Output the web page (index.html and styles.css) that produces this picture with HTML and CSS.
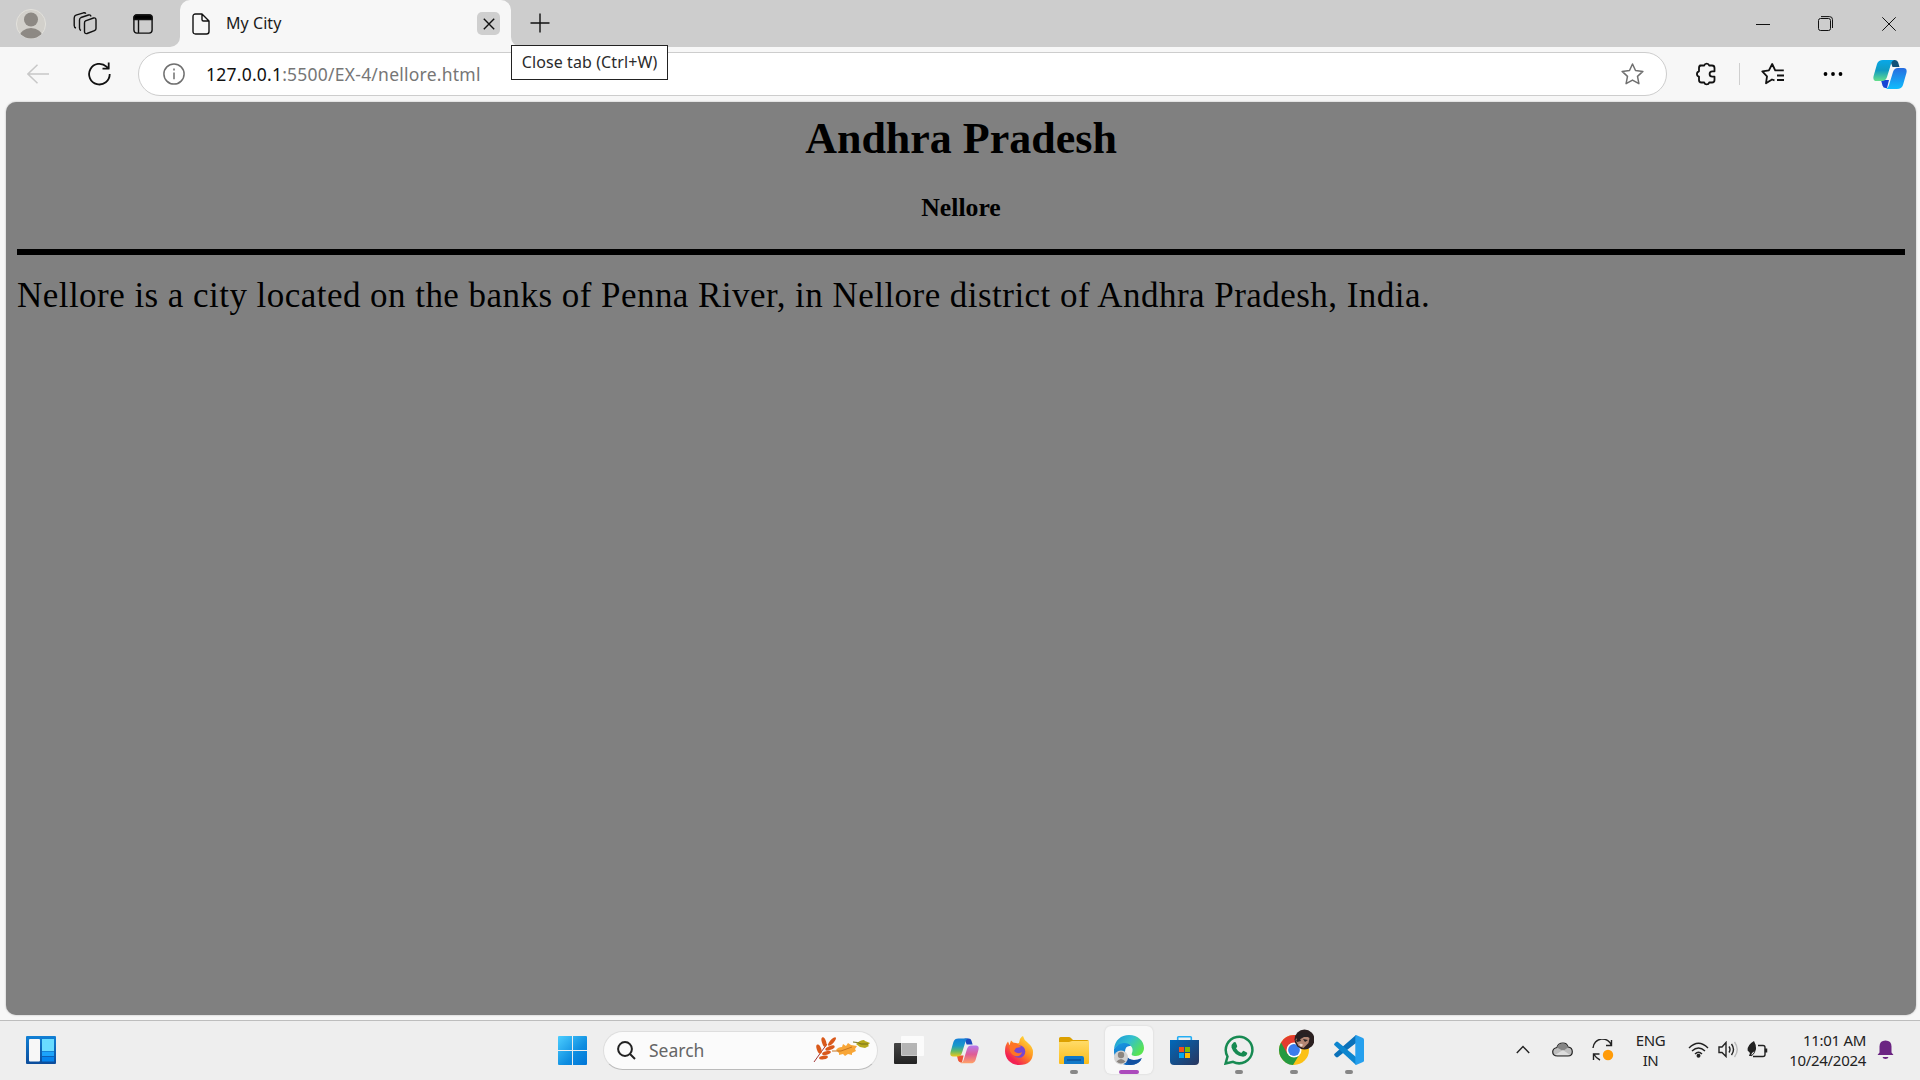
FILE: index.html
```html
<!DOCTYPE html>
<html lang="en">
<head>
<meta charset="utf-8">
<title>My City</title>
<link rel="stylesheet" href="styles.css">
</head>
<body>
<div class="desktop">
  <header class="titlebar">
    <div class="title-left">
      <div class="cell w61"><svg width="30" height="32" viewBox="0 0 30 32"><defs><clipPath id="av"><circle cx="15" cy="16" r="14.5"/></clipPath></defs><circle cx="15" cy="16" r="14.6" fill="#d2d0cb" stroke="#e2e1dc"/><g clip-path="url(#av)" fill="#8d8984"><circle cx="15" cy="11.5" r="7"/><ellipse cx="15" cy="29" rx="11.5" ry="9"/></g></svg></div>
      <div class="cell w48"><svg width="24" height="24" viewBox="0 0 24 24" class="line"><path d="M12.500 8.800 20.500 6Q23 5.400 23 8v8.500q0 1.500-1.500 2.100L14 21.500Q11.500 22 11.500 19.500V11Q11.500 9.300 12.500 8.800ZM8 18.500Q6.500 18 6.500 16V8Q6.500 6.300 8 5.500L15.500 3q2-.6 2.500 1.500M3 16Q1.200 15.500 1.200 13.500V6Q1.200 4 3 3.200L10.500.8q1.500-.4 2.400.8"/></svg></div>
      <div class="cell w68"><svg width="20" height="20" viewBox="0 0 20 20" class="line"><rect x=".9" y=".9" width="18.200" height="18.200" rx="3"/><path d="M1 5.500V3.500Q1 1 3.500 1h13Q19 1 19 3.500v2Z" fill="#000"/><path d="M5.500 6v13"/></svg></div>
    </div>
    <div class="tab-well">
      <div class="tab">
        <svg width="18" height="22" viewBox="0 0 18 22" class="line"><path d="M1 3.500Q1 1 3.500 1H10l7 7v10.500Q17 21 14.500 21h-11Q1 21 1 18.500ZM10 1v5.500Q10 8 11.500 8H17"/></svg>
        <span class="tab-title">My City</span>
        <span class="tab-close"><svg width="12" height="12" viewBox="0 0 12 12" class="line"><path d="m.8.8 10.400 10.400M11.200.8.8 11.200"/></svg></span>
      </div>
    </div>
    <div class="title-right">
      <div class="cell w58"><svg width="20" height="20" viewBox="0 0 20 20" class="line plus"><path d="M10 .5v19M.5 10h19"/></svg></div>
      <div class="window-buttons">
        <div class="cell w63"><svg width="14" height="14" viewBox="0 0 14 14" class="thin"><path d="M0 7.500h14"/></svg></div>
        <div class="cell w63"><svg width="15" height="15" viewBox="0 0 15 15" class="thin"><rect x=".5" y="2.500" width="12" height="12" rx="2"/><path d="M3 .6h8.500q3 0 3 3V12"/></svg></div>
        <div class="cell w63"><svg width="14" height="14" viewBox="0 0 14 14" class="thin"><path d="m.3.300 13.400 13.400M13.700.3.300 13.700"/></svg></div>
      </div>
    </div>
    <div class="tooltip"><span>Close tab (Ctrl+W)</span></div>
  </header>

  <div class="toolbar">
    <div class="cell w76"><svg width="22" height="20" viewBox="0 0 22 20" class="back"><path d="M22 10H1M10.500.7.900 10l9.600 9.300"/></svg></div>
    <div class="cell w46"><svg width="23" height="24" viewBox="0 0 23 24" class="line bold"><path d="M21.700 12A10.300 10.300 0 1 1 18.500 4.700L20.500 6.500M20.700.5v6.200h-6.200"/></svg></div>
    <div class="address">
      <svg width="22" height="22" viewBox="0 0 22 22" class="info"><circle cx="11" cy="11" r="10.100"/><path d="M11 9.500v6.800M11 5.500v2"/></svg>
      <span class="url"><b>127.0.0.1</b>:5500/EX-4/nellore.html</span>
      <svg width="23" height="22" viewBox="0 0 23 22" class="info star"><path d="m11.500 1 3 6.500 7.400.9-5.400 5 1.400 7.300-6.400-3.600-6.400 3.600 1.400-7.300-5.400-5 7.400-.9Z"/></svg>
    </div>
    <div class="cell w66 ext"><svg width="22" height="24" viewBox="0 0 22 24" class="line bold"><path d="M5 3.500h4.200a2.600 2.600 0 0 1 5 0H17q2.500 0 2.500 2.500v3.300h-2.200a2.700 2.700 0 0 0 0 5.400h2.200V18q0 2.500-2.500 2.500h-2.800a2.600 2.600 0 0 1-5 0H6.500Q4 20.500 4 18v-3.300a2.800 2.800 0 0 1 0-5.400V6Q4 3.500 6 3.500Z"/></svg></div>
    <div class="divider"></div>
    <div class="cell w66"><svg width="24" height="22" viewBox="0 0 24 22" class="line bold"><path d="M13.500 17.300 11 16.500l-6 3.800 1-7L1.300 8.400l6.600-1L11.200 1l3 6.400h8.600M16 12.500h7M16 17h7"/></svg></div>
    <div class="cell w54"><svg width="20" height="6" viewBox="0 0 20 6"><circle cx="2.500" cy="3" r="1.900"/><circle cx="10" cy="3" r="1.900"/><circle cx="17.500" cy="3" r="1.900"/></svg></div>
    <div class="cell w60"><svg width="34" height="30" viewBox="0 0 34 30"><defs><linearGradient id="c1" x2="0" y2="1"><stop stop-color="#08a8e9"/><stop offset=".5" stop-color="#119bc1"/><stop offset="1" stop-color="#65df8b"/></linearGradient><linearGradient id="c2" x2="0" y2="1"><stop stop-color="#276de0"/><stop offset="1" stop-color="#10bdfd"/></linearGradient></defs><path d="M17 1h5q2.500 0 3.200 2.500L26.500 8h-7Z" fill="#115279"/><path d="M8 21h8l-2 8h-1.500q-2.200 0-3-2.500Z" fill="#1745d4"/><path d="M10 1h11.500q-2.500.5-3.500 4l-4 13q-1.200 4-5 4H3.500Q-.5 22 .6 17L4 5Q5.300 1 10 1Z" fill="url(#c1)"/><path d="M24 30H12.500q2.500-.5 3.500-4l4-13q1.200-4 5-4h5.500q4 0 2.900 5L30 26q-1.300 4-6 4Z" fill="url(#c2)"/></svg></div>
  </div>

  <div class="viewport">
    <main class="page">
      <h1>Andhra Pradesh</h1>
      <h3>Nellore</h3>
      <hr>
      <p>Nellore is a city located on the banks of Penna River, in Nellore district of Andhra Pradesh, India.</p>
    </main>
  </div>

  <footer class="taskbar">
    <div class="widgets"><svg width="30" height="28" viewBox="0 0 30 28"><defs><linearGradient id="wg" x2="0" y2="1"><stop stop-color="#1180d5"/><stop offset="1" stop-color="#0b4c9b"/></linearGradient></defs><rect width="30" height="28" rx="1" fill="url(#wg)"/><rect x="3" y="3" width="11" height="22.500" rx="1" fill="#f7f7f7"/><path fill="#69dcff" d="M16 3h12v12H16z"/><path fill="#1ca4fb" d="M16 15.500h12v4.500H16z"/><path fill="#0584ed" d="M16 20.800h12v4.700H16z"/></svg></div>
    <div class="apps">
      <div class="start"><svg width="29" height="29" viewBox="0 0 29 29"><defs><linearGradient id="st" x2="1" y2="1"><stop stop-color="#4cceff"/><stop offset=".6" stop-color="#0e8de0"/><stop offset="1" stop-color="#0075d7"/></linearGradient></defs><path fill="url(#st)" d="M1 0h13v14H0V1Q0 0 1 0ZM15 0h13q1 0 1 1v13H15ZM0 15h14v14H1q-1 0-1-1ZM15 15h14v13q0 1-1 1H15Z"/></svg></div>
      <div class="search">
        <svg width="19" height="19" viewBox="0 0 19 19" class="glass"><circle cx="8" cy="8" r="6.900"/><path d="m13 13 5 5"/></svg>
        <span class="search-label">Search</span>
        <svg width="58" height="26" viewBox="0 0 58 26" class="leaves"><path d="M1 25Q8 15 14 7" stroke="#a3383a" fill="none"/><g fill="#d9591b"><ellipse cx="11" cy="5" rx="2.100" ry="5" transform="rotate(-18 11 5)"/><ellipse cx="19" cy="4.500" rx="2" ry="5.500" transform="rotate(42 19 4.500)"/><ellipse cx="6" cy="12" rx="2.200" ry="4.800" transform="rotate(-20 6 12)"/><ellipse cx="17" cy="11" rx="1.900" ry="5" transform="rotate(68 17 11)"/><ellipse cx="13.500" cy="16" rx="1.800" ry="4.500" transform="rotate(75 13.500 16)"/><ellipse cx="10.500" cy="20.500" rx="1.900" ry="4.500" transform="rotate(80 10.500 20.500)"/></g><path d="M23 13q2-3 6-3l1-3 3 2 2-3 3 2 6 1-2 3 1 2-4 2 0 2-4-1-3 2-2-2-4 1v-2Z" fill="#f8a637"/><path d="M19 14h9l11-4" stroke="#c87421" fill="none"/><path d="M43 7q4-4 8-4l1 1 5 2-2 2 1 1-4 2-5-1Z" fill="#b6a91c"/><path d="M40 5q5 0 8 2h7" stroke="#776f19" fill="none"/></svg>
      </div>
      <div class="app"><svg width="30" height="28" viewBox="0 0 30 28"><defs><linearGradient id="tv" x2="0" y2="1"><stop stop-color="#454545"/><stop offset="1" stop-color="#222"/></linearGradient></defs><rect y="7" width="23" height="21" rx="1" fill="url(#tv)"/><rect x="7" width="23" height="20" rx="1" fill="#fff" opacity=".75"/><path d="M8 7h15v12H8z" fill="#aaa" opacity=".7"/></svg></div>
      <div class="app"><svg width="29" height="27" viewBox="0 0 34 30"><defs><linearGradient id="p1" x2="0" y2="1"><stop stop-color="#147fd8"/><stop offset=".4" stop-color="#1899c9"/><stop offset=".7" stop-color="#61b969"/><stop offset="1" stop-color="#edc91b"/></linearGradient><linearGradient id="p2" x2="0" y2="1"><stop stop-color="#b57aef"/><stop offset=".5" stop-color="#df5c96"/><stop offset="1" stop-color="#ffa267"/></linearGradient></defs><path d="M17 1h5q2.500 0 3.200 2.500L26.500 8h-7Z" fill="#1b49bd"/><path d="M8 21h8l-2 8h-1.500q-2.200 0-3-2.500Z" fill="#ee5535"/><path d="M10 1h11.500q-2.500.5-3.500 4l-4 13q-1.200 4-5 4H3.500Q-.5 22 .6 17L4 5Q5.300 1 10 1Z" fill="url(#p1)"/><path d="M24 30H12.500q2.500-.5 3.500-4l4-13q1.200-4 5-4h5.500q4 0 2.900 5L30 26q-1.300 4-6 4Z" fill="url(#p2)"/></svg></div>
      <div class="app"><svg width="28" height="29" viewBox="0 0 28 29"><defs><linearGradient id="ff" x1="1" x2=".2" y2="1"><stop offset=".1" stop-color="#ffe43c"/><stop offset=".5" stop-color="#ff8b20"/><stop offset=".85" stop-color="#f32253"/></linearGradient></defs><path d="M14 29C6 29 0 23 0 15q0-6 3-9.500L4.500 9 6 4.500 10 8l4-1 1-4q2-3 3-3 1 4 4 6l1 1q5 4 5 9 0 13-14 13Z" fill="url(#ff)"/><circle cx="14" cy="15.500" r="6.300" fill="#7947cf"/><path d="M5 8q5-3 9 1l2 2-5 1-2 3q4 4 8 1-1 5-7 4Q3 17 5 8Z" fill="#ff7425"/></svg></div>
      <div class="app"><svg width="30" height="27" viewBox="0 0 30 27"><defs><linearGradient id="fd" x2="0" y2="1"><stop stop-color="#ffdb69"/><stop offset="1" stop-color="#fcbc19"/></linearGradient></defs><path d="M0 1.500Q0 0 1.500 0H10q1 0 2 1l2 2h14q2 0 2 2v6H0Z" fill="#dca000"/><path d="M0 5h10l3-1h17v22q0 1-1 1H1q-1 0-1-1Z" fill="url(#fd)"/><path d="M5 27v-6q0-2 2-2h16q2 0 2 2v6Z" fill="#1178c8"/><path d="M8 23h14" stroke="#0a4c91" stroke-width="1.300"/></svg><i></i></div>
      <div class="app active"><svg width="30" height="30" viewBox="0 0 30 30"><defs><linearGradient id="e1" x2="1" y2=".6"><stop stop-color="#1695d6"/><stop offset=".5" stop-color="#33bfd0"/><stop offset="1" stop-color="#5ae451"/></linearGradient><linearGradient id="e2" x2=".5" y2="1"><stop stop-color="#1a9be4"/><stop offset="1" stop-color="#0c62bc"/></linearGradient></defs><path d="M0 14C1 5 7 0 15 0c9 0 15 6 15 13 0 5-4 8-8 8-4 0-5-1-4-3 2-5-1-9-7-9-5 0-9 2-11 5Z" fill="url(#e1)"/><path d="M0 14C4 7 14 6 17 11q-6-1-6 6c0 7 8 11 16 8-3 4-7 5-12 5C6 30-1 23 0 14Z" fill="url(#e2)"/><path d="M12 20q4 8 16 3-3 7-12 7-5-2-4-10Z" fill="#1351a1"/><circle cx="7" cy="22.500" r="7" fill="#d2d2d2"/><circle cx="7" cy="20" r="3.200" fill="#8b8580"/><path d="M2.500 26.500q4.500-5 9 0-4.500 4-9 0Z" fill="#8b8580"/></svg><i></i></div>
      <div class="app"><svg width="29" height="29" viewBox="0 0 29 29"><defs><linearGradient id="ms" x2="1" y2="1"><stop stop-color="#0069bb"/><stop offset="1" stop-color="#29355d"/></linearGradient></defs><path d="M7.700 5V1.500Q7.700.8 8.500.8h12q.8 0 .8.700V5" fill="none" stroke="#24adf3" stroke-width="1.600"/><path d="M0 4h29v21q0 4-4 4H4q-4 0-4-4Z" fill="url(#ms)"/><path fill="#f34f1c" d="M9 11h5v5H9z"/><path fill="#7fbc00" d="M15 11h5v5h-5z"/><path fill="#01a6f0" d="M9 17h5v5H9z"/><path fill="#ffba01" d="M15 17h5v5h-5z"/></svg></div>
      <div class="app"><svg width="30" height="30" viewBox="0 0 30 30"><path d="M1.600 28.500 3.500 21.500A13.300 13.300 0 1 1 9 26.800Z" fill="none" stroke="#178a52" stroke-width="2.500"/><path d="M9.500 7.500q2-1 2.500.5l1.200 3q.3.800-1.200 2.300 1.700 3.400 5.200 4.700l1.600-1.800q.5-.6 1.200-.2l2.800 1.400q.7.400.3 1.600-1 2.700-4 2.700Q10 20.500 7.500 12.500q-.5-3 2-5Z" fill="#178a52"/></svg><i></i></div>
      <div class="app"><svg width="40" height="36" viewBox="0 0 40 36" class="chrome"><circle cx="20" cy="21" r="15" fill="#fbc116"/><path d="M7 13.500A15 15 0 0 1 33 13.500H20Z" fill="#e33b2e"/><path d="M7 13.500A15 15 0 0 0 19 36l7-11.500-6-3Z" fill="#249a41"/><path d="M7 13.500 13.500 25 20 14h13L20 8Z" fill="#e33b2e"/><circle cx="20" cy="21" r="7.500" fill="#fff"/><circle cx="20" cy="21" r="5.900" fill="#3a7cec"/><circle cx="30.500" cy="10.500" r="10" fill="#2b2021"/><path d="M21.500 11q2-5 9-5l5 3-1 5-5 5-5-2Z" fill="#b38673"/><path d="M22 7q7-7 15 1l-7 0-7 4ZM29 10l5 1-3 2ZM22 11l4-1 1 2-4 1Z" fill="#272123"/><path d="M25 15q3-1 4 1l-2 2Z" fill="#e7d2c7"/></svg><i></i></div>
      <div class="app"><svg width="30" height="30" viewBox="0 0 30 30"><path d="M22 0v8L4 22q-1 .8-2 0l-1.500-1.500q-.8-1 0-1.800Z" fill="#0b71b9"/><path d="M22 30v-8L4 7q-1-.8-2 0L.5 8.500q-.8 1 0 1.800Z" fill="#0d86cf"/><path d="m22 0 7 3q1 .5 1 1.500v21q0 1-1 1.500l-7 3q-.7-.5-.7-2V2q0-1.500.7-2Z" fill="#26a0ee"/></svg><i></i></div>
    </div>
    <div class="tray">
      <div class="cell w40"><svg width="14" height="9" viewBox="0 0 14 9" class="tray-line"><path d="m.8 8 6.200-6.500L13.200 8"/></svg></div>
      <div class="cell w40"><svg width="21" height="15" viewBox="0 0 21 15"><path d="M5.500 14Q.7 14 .7 9.800.7 6.500 5 5.500 6 1 11 1q4 0 5 4 4.300.5 4.300 4.700T16 14Z" fill="#bdbdbd" stroke="#222" stroke-width="1.200"/><path d="M5 5.500Q6 1.500 11 1.500q4 0 5 4L11 9Z" fill="#858585"/><path d="m3 13 8-5 7 5Z" fill="#ddd"/></svg></div>
      <div class="cell w40"><svg width="22" height="22" viewBox="0 0 22 22" class="sync"><path d="M1 9A9.500 9.500 0 0 1 19.500 6.500M19.500 1v5.500H14M8 21q-4-2-6-5.500M1.500 21v-6h6" /><circle cx="16" cy="16" r="5.200"/></svg></div>
      <div class="lang"><span>ENG</span><span>IN</span></div>
      <div class="status">
        <svg width="21" height="16" viewBox="0 0 21 16" class="tray-line"><path d="M1 6Q10.500-3.500 20 6M4 9q6.500-6 13 0M7 12q3.500-3.500 7 0"/><circle cx="10.500" cy="13.700" r="1.300" fill="#222"/></svg>
        <svg width="21" height="17" viewBox="0 0 21 17" class="tray-line"><path d="M1 6h3l4-4.500v14L4 11.500H1ZM11 5.500q2 3 0 6M13.500 3q4 5.500 0 11"/><path d="M16.500 1q5.500 7.500 0 15" stroke="#bbb"/></svg>
        <svg width="22" height="18" viewBox="0 0 22 18" class="tray-line"><path d="M11 4.500h5Q18 4.500 18 6.500v7q0 2-2 2H6"/><path d="M19 7.500v4" stroke-width="2.500"/><path d="M7 0Q0 4 .6 9.500L3 12l-1 3h2l1-3q7-3 2-12Z" fill="#222" stroke="none"/><path d="M4 15q5-3 4-9" stroke-width="1"/></svg>
      </div>
      <div class="clock"><span class="time">11:01 AM</span><span class="date">10/24/2024</span></div>
      <svg width="17" height="20" viewBox="0 0 17 20" class="bell"><path d="M8.500.5q6 0 6 6v6l2 2.500H.5l2-2.500v-6q0-6 6-6ZM5.500 17h6q-.5 2-3 2t-3-2Z"/></svg>
    </div>
  </footer>
</div>
</body>
</html>
```
FILE: styles.css
```css
* { box-sizing: border-box; }
body { margin: 0; font-family: "Noto Sans", "Open Sans", sans-serif; overflow: hidden; }
.desktop { width: 1920px; height: 1080px; display: flex; flex-direction: column; background: #f7f7f7; }
svg { display: block; flex: none; }
.cell { display: flex; align-items: center; justify-content: center; flex: none; height: 100%; }
.w40 { width: 40px; } .w46 { width: 46px; } .w48 { width: 48px; } .w54 { width: 54px; }
.w58 { width: 58px; } .w60 { width: 60px; } .w61 { width: 61px; } .w63 { width: 63px; }
.w66 { width: 66px; } .w68 { width: 68px; } .w76 { width: 76px; }
.line { fill: none; stroke: #111; stroke-width: 1.4; stroke-linejoin: round; }
.line.bold { stroke-width: 1.8; }
.thin { fill: none; stroke: #111; stroke-width: 1; }
.plus { margin-bottom: 2px; }

.titlebar { position: relative; display: flex; height: 47px; flex: none; }
.title-left { display: flex; width: 180px; background: #cdcdcd; border-bottom-right-radius: 10px; }
.tab-well { width: 331px; background: #cdcdcd; border-radius: 0 0 10px 10px; }
.tab { height: 47px; display: flex; align-items: center; padding: 0 11px 0 12px; background: #f7f7f7; border-radius: 10px 10px 0 0; }
.tab-title { margin: 0 0 2px 16px; font-size: 16px; letter-spacing: .05px; color: #1b1b1b; }
.tab-close { margin-left: auto; width: 23px; height: 23px; border-radius: 5px; background: #cfcfcf; display: flex; align-items: center; justify-content: center; }
.title-right { flex: 1; display: flex; justify-content: space-between; background: #cdcdcd; border-bottom-left-radius: 10px; }
.window-buttons { display: flex; }
.tooltip { position: absolute; left: 511px; top: 45px; z-index: 5; width: 157px; height: 35px; padding-bottom: 2px; border: 1px solid #222; background: #fff; display: flex; align-items: center; justify-content: center; font-size: 16px; letter-spacing: .1px; color: #2b2b2b; white-space: nowrap; }

.toolbar { display: flex; align-items: center; height: 55px; flex: none; padding-bottom: 2px; }
.back { fill: none; stroke: #c8c8c8; stroke-width: 1.500; }
.address { display: flex; align-items: center; width: 1529px; height: 44px; margin-left: 16px; padding: 0 22px 0 24px; border: 1px solid #cdcdcd; border-radius: 22px; background: #fff; }
.info { fill: none; stroke: #707070; stroke-width: 1.500; stroke-linejoin: round; }
.url { margin-left: 21px; font-size: 17.500px; letter-spacing: .23px; color: #767676; white-space: nowrap; }
.url b { font-weight: 400; color: #111; }
.star { margin-left: auto; }
.ext { margin-left: 6px; }
.divider { width: 1px; height: 22px; background: #cfcfcf; }

.viewport { height: 918px; flex: none; padding: 0 4px 5px 6px; }
.page { height: 913px; padding: 0 11px; border-radius: 10px; background: #808080; box-shadow: 0 0 2px #aaa; color: #000; font-family: "Liberation Serif", serif; overflow: hidden; }
.page h1 { margin: 11px 0 0; font-size: 44px; line-height: 52px; text-align: center; }
.page h3 { margin: 28px 0 0; font-size: 25.740px; line-height: 30px; text-align: center; }
.page hr { margin: 26px 0 0; height: 6px; border: 0; background: #000; }
.page p { margin: 20px 0 0; font-size: 35px; letter-spacing: .46px; line-height: 42px; white-space: nowrap; }

.taskbar { position: relative; display: flex; height: 60px; flex: none; border-top: 1px solid #bdbdbd; background: #eee; }
.widgets { width: 558px; padding: 15px 0 0 26px; }
.apps { display: flex; align-items: center; padding-bottom: 1px; }
.start { width: 29px; }
.search { display: flex; align-items: center; width: 275px; height: 39px; margin: 0 7px 0 16px; padding: 0 6px 0 13px; border: 1px solid #dedede; border-bottom-color: #bbb; border-radius: 20px; background: #fbfbfb; }
.glass { fill: none; stroke: #222; stroke-width: 2; }
.search-label { margin-left: 13px; font-size: 17.500px; color: #666; }
.leaves { margin-left: auto; }
.app { position: relative; display: flex; align-items: center; justify-content: center; width: 48px; height: 48px; margin-right: 7px; border-radius: 6px; }
.app.active { background: #f8f8f8; box-shadow: 0 0 2px #ccc; }
.app i { position: absolute; bottom: 0; left: 20px; width: 8px; height: 4px; border-radius: 2px; background: #868686; }
.app.active i { left: 14px; width: 20px; background: #ab4abc; }
.chrome { margin-top: -6px; }
.tray { display: flex; align-items: center; margin-left: auto; padding: 0 26px 2px 0; font-size: 15px; line-height: 20px; color: #222; }
.tray-line { fill: none; stroke: #222; stroke-width: 1.400; }
.sync { fill: none; stroke: #222; stroke-width: 1.400; }
.sync circle { fill: #ff9b08; stroke: none; }
.lang { display: flex; flex-direction: column; align-items: center; width: 56px; letter-spacing: -.4px; }
.status { display: flex; align-items: center; gap: 8.500px; width: 80px; margin-left: 9.500px; }
.clock { display: flex; flex-direction: column; align-items: flex-end; width: 98px; letter-spacing: -.3px; }
.bell { margin-left: 11px; fill: #6b2482; }
```
